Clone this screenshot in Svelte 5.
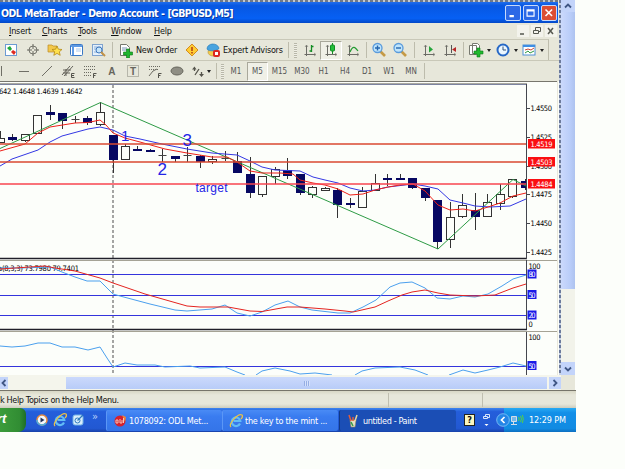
<script lang="ts">
	type Tool = { icon?: string; text?: string; width: number; pressed?: boolean };

	const menus = [
		{ name: 'Insert', width: 33 },
		{ name: 'Charts', width: 36 },
		{ name: 'Tools', width: 33 },
		{ name: 'Window', width: 43 },
		{ name: 'Help', width: 30 }
	];

	const mainTools: Tool[] = [
		{ icon: 'market', width: 22 },
		{ icon: 'cross', width: 22 },
		{ icon: 'star', width: 21 },
		{ icon: 'terminal', width: 22 },
		{ icon: 'tester', width: 22 },
		{ icon: 'sep', width: 7 },
		{ icon: 'order', width: 20 },
		{ text: 'New Order', width: 46 },
		{ icon: 'warning', width: 20 },
		{ icon: 'expert', width: 21 },
		{ text: 'Expert Advisors', width: 63 },
		{ icon: 'sep', width: 5 },
		{ icon: 'grip', width: 8 },
		{ icon: 'bars', width: 21 },
		{ icon: 'candle', width: 22, pressed: true },
		{ icon: 'line', width: 21 },
		{ icon: 'sep', width: 6 },
		{ icon: 'zoomin', width: 20 },
		{ icon: 'zoomout', width: 22 },
		{ icon: 'sep', width: 7 },
		{ icon: 'scroll', width: 21 },
		{ icon: 'shift', width: 21 },
		{ icon: 'sep', width: 6 },
		{ icon: 'indicator', width: 19 },
		{ icon: 'drop', width: 8 },
		{ icon: 'clock', width: 19 },
		{ icon: 'drop', width: 7 },
		{ icon: 'template', width: 20 },
		{ icon: 'drop', width: 6 }
	];

	const lineTools: Tool[] = [
		{ icon: 'vline', width: 12 },
		{ icon: 'hline', width: 24 },
		{ icon: 'trend', width: 21 },
		{ icon: 'channel', width: 22 },
		{ icon: 'fibo', width: 22 },
		{ icon: 'letter', width: 21 },
		{ icon: 'label', width: 22 },
		{ icon: 'fan', width: 22 },
		{ icon: 'ellipse', width: 22 },
		{ icon: 'arrows', width: 18 },
		{ icon: 'drop', width: 6 },
		{ icon: 'sep', width: 8 },
		{ icon: 'grip', width: 5 },
		{ text: 'M1', width: 22 },
		{ text: 'M5', width: 21, pressed: true },
		{ text: 'M15', width: 23 },
		{ text: 'M30', width: 22 },
		{ text: 'H1', width: 21 },
		{ text: 'H4', width: 22 },
		{ text: 'D1', width: 22 },
		{ text: 'W1', width: 22 },
		{ text: 'MN', width: 22 },
		{ icon: 'sep', width: 5 }
	];

	// x, high, low, body top, body bottom, kind (f = filled, o = open, d = doji)
	const candles: [number, number, number, number, number, string][] = [
		[0.5, 131, 142, 138, 142, 'o'],
		[12.5, 134, 141, 137, 140, 'f'],
		[25.5, 134, 142, 134, 140, 'o'],
		[37.5, 115, 133, 115, 133, 'o'],
		[50.5, 105, 120, 112, 115, 'f'],
		[62.5, 113, 129, 113, 121, 'f'],
		[75.5, 116, 123, 119, 120, 'd'],
		[87.5, 116, 125, 118, 123, 'f'],
		[100.5, 102, 126, 112, 124, 'o'],
		[113.5, 135, 173, 135, 160, 'f'],
		[125.5, 144, 159, 146, 159, 'o'],
		[137.5, 146, 151, 149, 151, 'f'],
		[150.5, 149, 152, 150, 152, 'f'],
		[162.5, 149, 162, 155, 156, 'd'],
		[175.5, 156, 162, 156, 159, 'f'],
		[187.5, 147, 162, 155, 156, 'd'],
		[200.5, 155, 168, 156, 162, 'f'],
		[212.5, 156, 164, 159, 161, 'o'],
		[225.5, 151, 161, 158, 159, 'd'],
		[237.5, 152, 173, 161, 173, 'f'],
		[250.5, 157, 198, 174, 193, 'f'],
		[262.5, 176, 197, 176, 194, 'o'],
		[275.5, 167, 184, 169, 176, 'o'],
		[287.5, 158, 179, 170, 176, 'f'],
		[300.5, 174, 195, 174, 193, 'f'],
		[312.5, 186, 198, 187, 194, 'o'],
		[325.5, 187, 191, 188, 190, 'o'],
		[337.5, 188, 218, 190, 205, 'f'],
		[350.5, 198, 208, 203, 205, 'f'],
		[362.5, 187, 207, 191, 207, 'o'],
		[375.5, 174, 191, 183, 190, 'o'],
		[387.5, 174, 186, 178, 180, 'f'],
		[400.5, 174, 180, 178, 180, 'f'],
		[412.5, 178, 189, 178, 188, 'f'],
		[425.5, 188, 201, 188, 198, 'f'],
		[437.5, 200, 249, 200, 242, 'f'],
		[450.5, 202, 248, 217, 239, 'o'],
		[462.5, 194, 218, 205, 216, 'o'],
		[475.5, 193, 230, 210, 217, 'f'],
		[487.5, 194, 216, 202, 216, 'o'],
		[500.5, 184, 210, 194, 203, 'o'],
		[512.5, 179, 198, 179, 196, 'o'],
		[525.5, 179, 190, 181, 188, 'f']
	];

	const prices = [
		{ y: 108, text: '1.4550' },
		{ y: 137, text: '1.4525' },
		{ y: 166, text: '1.4500' },
		{ y: 194, text: '1.4475' },
		{ y: 223, text: '1.4450' },
		{ y: 252, text: '1.4425' }
	];

	const levels = [
		{ y: 144, text: '1.4519' },
		{ y: 162, text: '1.4503' },
		{ y: 184, text: '1.4484' }
	];
</script>

{#snippet glyph(name: string)}
	<svg class="glyph" viewBox="0 0 16 16" width="16" height="16">
		{#if name === 'market'}
			<rect x="2.5" y="2.5" width="11" height="11" fill="#fff" stroke="#6c9bd2" />
			<path d="M4 6l3-2 2 3-2 2z" fill="#1fa83a" />
			<path d="M8 10l2-2 3 2-2 3z" fill="#e02a20" />
		{:else if name === 'cross'}
			<circle cx="8" cy="8" r="4" fill="none" stroke="#77776e" />
			<path d="M8 2v5M8 9v5M2 8h5M9 8h5" stroke="#66665e" />
		{:else if name === 'star'}
			<path d="M1 3h4l1 1h4v6H1z" fill="#f3c84c" stroke="#ba8b27" stroke-width=".7" />
			<path d="M10 4l1.4 3.2 3.6.3-2.7 2.3.9 3.5L10 11.4l-3.2 1.9.9-3.5L5 7.500l3.600-.3z" fill="#ffe14d" stroke="#b58a18" stroke-width=".8" />
		{:else if name === 'terminal'}
			<rect x="2.500" y="2.500" width="12" height="11" rx="1" fill="#fff" stroke="#3977c4" />
			<path d="M3 4h11M5 4v9" stroke="#5e9ae4" stroke-width="2" />
			<path d="M8 7h5M8 9h5" stroke="#aac9ee" />
		{:else if name === 'tester'}
			<rect x="2.500" y="2.500" width="10" height="11" fill="#e5f0fb" stroke="#7fa3ce" />
			<path d="M4 5h7M4 7h5M4 10h3" stroke="#8aafd8" />
			<circle cx="9" cy="8" r="3" fill="#c6e5fa" stroke="#3e76bd" />
			<path d="M11 10l4 4" stroke="#c29247" stroke-width="2" />
		{:else if name === 'order'}
			<path d="M2.500 2.500h6l3 3v8h-9z" fill="#fff" stroke="#75776d" />
			<path d="M4 6h5M4 8h5" stroke="#7895b7" />
			<path d="M8.500 7h3v3h3v3h-3v3h-3v-3h-3v-3h3z" fill="#1fb52f" stroke="#0b7916" stroke-width=".6" />
		{:else if name === 'warning'}
			<path d="M8 2l6 6-6 6-6-6z" fill="#ffcc32" stroke="#d48b1f" />
			<path d="M8 5v4M8 10v1.500" stroke="#b33a10" stroke-width="1.500" />
		{:else if name === 'expert'}
			<ellipse cx="8" cy="10" rx="5" ry="4" fill="#f3ca4c" stroke="#b9902e" stroke-width=".6" />
			<path d="M2 7c0-6 10-7 12-1 0 3-11 4-12 1z" fill="#48a3df" stroke="#2477b5" stroke-width=".6" />
			<rect x="8" y="8" width="7" height="7" rx="2" fill="#dc2722" />
			<rect x="10" y="10" width="3" height="3" fill="#fff" />
		{:else if name === 'bars' || name === 'candle' || name === 'line' || name === 'scroll' || name === 'shift'}
			<path d="M4.500 3v11M2.500 12.500h11" fill="none" stroke="#6b6b65" />
			<path d="M3 5l1.500-2L6 5M12 11l2 1.500-2 1.500" fill="none" stroke="#8a8a83" stroke-width=".8" />
			{#if name === 'bars'}
				<path d="M9.500 3v7M7.500 9h2M9.500 4.500h2" stroke="#138c24" stroke-width="1.300" />
			{:else if name === 'candle'}
				<path d="M9.500 1v11" stroke="#138c24" />
				<rect x="7.500" y="3" width="4" height="6" rx="1" fill="#24bf3c" stroke="#138c24" />
			{:else if name === 'line'}
				<path d="M5 10c3-7 5-5 8-1" fill="none" stroke="#239b32" stroke-width="1.200" />
			{:else if name === 'scroll'}
				<path d="M8 4l4 3.500-4 3z" fill="#25a53b" />
			{:else}
				<path d="M9.500 3v8" stroke="#555" />
				<path d="M14 5l-4 2.500 4 2.500z" fill="#b72828" />
			{/if}
		{:else if name === 'zoomin' || name === 'zoomout'}
			<path d="M9 9l5 5" stroke="#c59a46" stroke-width="2.600" />
			<circle cx="6.500" cy="6" r="4.500" fill="#bfe4fb" stroke="#5a9bdc" stroke-width="1.300" />
			<path d={name === 'zoomin' ? 'M4 6h5M6.500 3.500v5' : 'M4 6h5'} stroke="#2466af" stroke-width="1.400" />
		{:else if name === 'indicator'}
			<path d="M1.500 3.500h7v9h-7zM4.500 1.500h5l2 2v8h-7z" fill="#fff" stroke="#777970" />
			<path d="M9 6h3v3h3v3h-3v3H9v-3H6V9h3z" fill="#21b92f" stroke="#0c7c19" stroke-width=".6" />
		{:else if name === 'clock'}
			<circle cx="8" cy="8" r="5.500" fill="#ecf7ff" stroke="#2668c6" stroke-width="2" />
			<path d="M8 4.500V8h3" fill="none" stroke="#355378" />
		{:else if name === 'template'}
			<rect x="2" y="3" width="12" height="10" fill="#fff" stroke="#5091d4" />
			<path d="M2 4h12" stroke="#3e8ee4" stroke-width="2" />
			<path d="M4 8l3-1 3 1 3-2" fill="none" stroke="#c64634" />
			<path d="M4 11l3-2 2 2 4-2" fill="none" stroke="#2e9940" />
		{:else if name === 'hline'}
			<path d="M3 8.500h10" stroke="#706f66" />
		{:else if name === 'vline'}
			<path d="M3.500 3v10" stroke="#706f66" />
		{:else if name === 'trend'}
			<path d="M3 13L13 3" stroke="#706f66" />
		{:else if name === 'channel'}
			<path d="M2 12L10 3M4 13l9-10M3 7h8M3 10h7M6 6v7" stroke="#66655d" />
			<path d="M14.500 10.500h-3v4h3M11.500 12.500h2.500" fill="none" stroke="#55544d" />
		{:else if name === 'fibo' || name === 'fan'}
			{#if name === 'fibo'}
				<path d="M2 3.500h12M2 6.500h12M2 9.500h8M2 12.500h7" stroke="#6c6b62" stroke-dasharray="1 1" />
			{:else}
				<path d="M2 3.500h12M2 6.500h9" stroke="#6c6b62" stroke-dasharray="1 1" />
				<path d="M2 13l4-5 4-2" fill="none" stroke="#6c6b62" />
			{/if}
			<path d="M11.500 15v-4.500h3M11.500 12.500h2" fill="none" stroke="#55544d" />
		{:else if name === 'letter'}
			<text x="4.300" y="12" class="bold">A</text>
		{:else if name === 'label'}
			<rect x="2.500" y="2.500" width="11" height="11" fill="none" stroke="#85847a" stroke-dasharray="1 1" />
			<text x="5" y="12" class="bold">T</text>
		{:else if name === 'ellipse'}
			<ellipse cx="8" cy="8" rx="6" ry="4" fill="#8f8e84" stroke="#66655c" />
		{:else if name === 'arrows'}
			<path d="M3 6.500l2.500-3 2 3zM10 11h5l-2.500 3z" fill="#55544c" />
			<path d="M5.500 6v2M12.500 9v3M10 6l-4 6" stroke="#55544c" stroke-width="1.300" />
		{/if}
	</svg>
{/snippet}

{#snippet tools(list: Tool[])}
	{#each list as t}
		<span class="tool" class:pressed={t.pressed} class:caption={t.text} style:width="{t.width}px">
			{#if t.text}
				{t.text}
			{:else if t.icon === 'sep'}
				<i class="sep"></i>
			{:else if t.icon === 'grip'}
				<i class="grip"></i>
			{:else if t.icon === 'drop'}
				<i class="drop"></i>
			{:else if t.icon}
				{@render glyph(t.icon)}
			{/if}
		</span>
	{/each}
{/snippet}

{#snippet chevron(d: string)}
	<svg viewBox="0 0 10 10" width="10" height="10">
		<path {d} fill="none" stroke="#3f5684" stroke-width="1.800" />
	</svg>
{/snippet}

{#snippet ie()}
	<svg viewBox="0 0 14 14" width="14" height="14">
		<path d="M11 9.500A4.300 4.300 0 1 1 11.300 7H4.500" fill="none" stroke="#62bdf6" stroke-width="2.200" />
		<path d="M2 13C-1 10 9-1 13 1c1 1 0 3-1 4" fill="none" stroke="#efc243" stroke-width="1.200" />
	</svg>
{/snippet}

<div class="screen">
	<div class="canvas">
		<div class="window">
			<div class="titlebar">
				<span class="title">ODL MetaTrader - Demo Account - [GBPUSD,M5]</span>
				<span class="controls">
					<svg viewBox="0 0 16 16"><path d="M4 11.500h5" stroke="#fff" stroke-width="2.500" /></svg>
					<svg viewBox="0 0 16 16"><path d="M3.500 4.500h8v7h-8zM3.500 5.500h8" fill="none" stroke="#fff" stroke-width="1.300" /></svg>
					<svg class="close" viewBox="0 0 16 16"><path d="M4 4l7.500 7.500M11.500 4L4 11.500" stroke="#fff" stroke-width="1.800" /></svg>
				</span>
			</div>

			<div class="menubar">
				{#each menus as m}
					<span class="menu" style:width="{m.width}px"><u>{m.name[0]}</u>{m.name.slice(1)}</span>
				{/each}
				<span class="mdi">
					<svg viewBox="0 0 12 12"><path d="M3 9h4" stroke="#55574f" stroke-width="1.500" /></svg>
					<svg viewBox="0 0 12 12"><path d="M2.500 5.500h5v3h-5zM4.500 5V2.500h5v4H8" fill="none" stroke="#55574f" /></svg>
					<svg viewBox="0 0 12 12"><path d="M3 3l5 6M8 3L3 9" stroke="#55574f" stroke-width="1.500" /></svg>
				</span>
			</div>

			<div class="toolbar main">{@render tools(mainTools)}</div>
			<div class="toolbar lines">{@render tools(lineTools)}</div>

			<svg class="chart" viewBox="0 81 559 294" width="559" height="294">
				<rect x="0" y="81" width="559" height="294" fill="#fcfefa" />
				<path d="M0 81.500h557" stroke="#77766d" />
				<path d="M0 83.500h527" stroke="#a9a9a0" />
				<path d="M0 84.500h527" stroke="#7c83a0" />
				<path d="M557.500 81v294" stroke="#e9e8da" />

				<path d="M113 85v290" stroke="#4d4d4d" stroke-dasharray="3 2" />

				{#each candles as [x, high, low, top, bottom, kind]}
					<path d="M{x} {high}V{low}" stroke="#333" />
					{#if kind === 'f'}
						<rect x={x - 4.5} y={top} width={x > 520 ? 5 : 9} height={bottom - top} fill="#070862" />
					{:else if kind === 'o'}
						<rect x={x - 4} y={top + 0.5} width="8" height={bottom - top} fill="#fcfefa" stroke="#333" />
					{:else}
						<path d="M{x - 4} {top + 0.5}h8" stroke="#444" />
					{/if}
				{/each}

				<path class="thin" d="M0 148.500L34 133 100.500 102.500 438 249 513 179.500 526 186" stroke="#2d9b45" />
				<path class="thin" d="M0 166l12-7 26-9 12-8 12-6 26-7 12-2 13 3 12 6 15 3 22 5 25 5 25 4 25 2 13 6 12 6 13 3 25 1 13 6 12 3 13 3 12 5 13 3 12-1 13-3 25-3 12 2 13 3 12 11 13 3 12 3 15 1 20-1 16-7" stroke="#3438e4" />
				<path class="thin" d="M0 151l25-7 13-11 12-6 25-4 13-.5 12-2.500 6 5 7 8 12 5 15 4 25 7 22 4 25 4h15l10 5 13 9 12 2h18l13 1 7 6 13 3 12 2 13 4 12 6 13-1 12-4 13-3 12-2 13-1 12 7 13 14 12 5 13-1 12 2 13-4 12-4 13-7 13-3" stroke="#ee2018" />

				<path d="M0 144h526M0 162h526" stroke="#d94a32" stroke-width="1.300" />
				<path d="M0 184h526" stroke="#f9444f" stroke-width="1.300" />

				<g class="notes">
					<text x="121" y="141" font-size="15">1</text>
					<text x="157.500" y="175" font-size="17">2</text>
					<text x="182.500" y="146" font-size="17">3</text>
					<text x="195.500" y="192" font-size="12" textLength="32">target</text>
				</g>

				<text x="-1" y="93.500" class="num" textLength="83.500">642 1.4648 1.4639 1.4642</text>

				<path d="M0 258.500h527" stroke="#20202a" stroke-width="1.400" />
				<path d="M0 260.500h557" stroke="#a5a395" />
				<path d="M526.500 84v175M526.500 260v69M526.500 331v44" stroke="#44464e" />

				<!-- stochastic -->
				<path d="M0 274.500h526M0 295.500h526M0 315.500h526" stroke="#3434dc" />
				<text x="-2" y="271" class="num" textLength="81">a(8,3,3) 73.7980 79.7401</text>
				<path class="thin" d="M0 268h20l30-1 12 5 13 5 12 4h13l6 6 7 7 7 2 30 8 25 6 12 1 25-2 13-4 12 8 13 3 12-4 13-7 13-4 12 6 12 3 26 3h12l13-6 13-7 14-13 10-4 12-1 13 6 12 10 13 1 13-3 12 1 13-3 14-8 11-7 13-4" stroke="#4ba0ee" />
				<path class="thin" d="M0 269l15-1 30-2 10 2 20 3 25 7 13 5 32 11 42 12 13 1h28l22 4 12 .5 25-4.500h13l25 2 20 2 8 1 22-5 13-6 14-6 10-3 13-2 13 3 12 2 25 1 20-1 5-2 13-5 13-4" stroke="#e42420" />
				<path d="M0 329.500h527" stroke="#20202a" stroke-width="1.300" />
				<path d="M0 331.500h557" stroke="#a5a395" />

				<!-- rsi -->
				<path d="M0 366.500h526" stroke="#3434dc" />
				<path class="thin" d="M0 346l12 1 13-1 13-3h12l12 4h13l13 3 12-3 7 11 6 9 12-4 12 2h18l10 2 25-1 10 2 25-1 12 5 8 3M256 375l6-4 13-3 15 3 10 3 15-1 17 2M355 375l7-4 13-3 25-1 15 3 13 5M449 375l14-5 12 3 13-3 12-3 13-4 13 3" stroke="#4ba0ee" />

				{#each prices as p}
					<path d="M527 {p.y + 0.5}h3" stroke="#44464e" />
					<text x="530.500" y={p.y + 3} class="num" textLength="21.500">{p.text}</text>
				{/each}
				{#each levels as l}
					<rect x="528" y={l.y - 5} width="27" height="9.500" fill="#fa0f12" />
					<text x="530.500" y={l.y + 3} class="num" fill="#fff" textLength="22">{l.text}</text>
				{/each}

				<text x="528.500" y="268.500" class="num" textLength="12">100</text>
				<text x="528.500" y="327" class="num">0</text>
				<text x="528.500" y="339.500" class="num" textLength="12">100</text>
				{#each [{ y: 274, v: 80 }, { y: 294.5, v: 50 }, { y: 315, v: 20 }, { y: 365.5, v: 50 }] as b}
					<rect x="527.500" y={b.y - 4.5} width="9" height="9" fill="#1a1ae8" />
					<text x="528.500" y={b.y + 3.2} class="num" fill="#fff" textLength="7">{b.v}</text>
				{/each}
			</svg>
		</div>

		<div class="edge"></div>

		<div class="vscroll">
			<span class="sbtn">{@render chevron('M2 6.500L5 3.500 8 6.500')}</span>
			<span class="vthumb"></span>
			<span class="sbtn down">{@render chevron('M2 3.500L5 6.500 8 3.500')}</span>
		</div>
	</div>

	<div class="hscroll">
		<span class="sbtn left">{@render chevron('M6.500 2L3.500 5 6.500 8')}</span>
		<span class="hthumb"><i></i></span>
		<span class="sbtn right">{@render chevron('M3.500 2L6.500 5 3.500 8')}</span>
	</div>

	<div class="status">
		<span class="help">k Help Topics on the Help Menu.</span>
		<span class="cell"></span>
		<span class="cell last"></span>
	</div>

	<div class="taskbar">
		<span class="start">rt</span>
		<span class="quick">
			<svg viewBox="0 0 14 14" width="14" height="14">
				<circle cx="7" cy="7" r="5" fill="#f5f8fc" stroke="#e48a42" stroke-width="1.500" />
				<path d="M2 7a5 5 0 0 0 9 3" fill="none" stroke="#4cb0e0" stroke-width="1.500" />
				<path d="M5.500 4.500l4 2.500-4 2.500z" fill="#24345c" />
			</svg>
			{@render ie()}
			<svg viewBox="0 0 14 14" width="14" height="14">
				<rect x="2" y="2" width="10" height="10" rx="2" fill="#d9edfb" stroke="#73b3e5" />
				<circle cx="6.500" cy="7.500" r="2.500" fill="none" stroke="#2d79be" />
				<path d="M6.500 7.500L12 2" stroke="#2d79be" stroke-width="1.200" />
			</svg>
		</span>
		<span class="more">»</span>
		<span class="task">
			<svg viewBox="0 0 14 14" width="14" height="14">
				<circle cx="7" cy="7" r="5.500" fill="#d5212d" />
				<path d="M9 1l4 2-1 5z" fill="#f28036" />
				<path d="M3 9V6h2v3zM7 5v4h2V6M10.500 4v5" fill="none" stroke="#f9c2b6" />
			</svg>
			<span>1078092: ODL Met...</span>
		</span>
		<span class="task two">
			{@render ie()}
			<span>the key to the mint ...</span>
		</span>
		<span class="task active">
			<svg viewBox="0 0 14 14" width="14" height="14">
				<path d="M4 6h6l-1 7H5z" fill="#e5dfc4" stroke="#9a8c61" stroke-width=".6" />
				<path d="M5 7L3 1M7 7V3" stroke="#e25c3c" stroke-width="1.500" />
				<path d="M9 7l2-6" stroke="#ead39a" stroke-width="1.500" />
				<path d="M5 8l2 4" stroke="#379b4a" stroke-width="1.500" />
			</svg>
			<span>untitled - Paint</span>
		</span>
		<span class="lang">
			<b>?</b>
			<svg viewBox="0 0 10 16" width="10" height="16">
				<path d="M1.500 4.500h4v2h-4zM3.500 4V2.500h4v3H6" fill="none" stroke="#d9e6fb" />
				<path d="M2.500 12h4l-2 2z" fill="#fff" />
			</svg>
		</span>
		<span class="tray">
			<svg class="hide" viewBox="0 0 14 14" width="14" height="14">
				<circle cx="7" cy="7" r="6.300" fill="#2585e6" stroke="#8ac9fa" stroke-width=".8" />
				<path d="M8.500 4L5.500 7l3 3" fill="none" stroke="#fff" stroke-width="1.700" />
			</svg>
			<svg viewBox="0 0 14 14" width="14" height="14">
				<path d="M1.500 3.500h5v5h-5zM1 11.500h6M3.500 9v2" fill="#77b8e9" stroke="#d3dde8" />
				<path d="M8.500 4q1.500 2 0 4M10.500 3q2 3 0 6M12.300 2q2 4 0 8" fill="none" stroke="#58cf43" />
			</svg>
			<span class="time">12:29 PM</span>
		</span>
	</div>
</div>

<style>
	:global(body) {
		background: #fcfefa;
		overflow: hidden;
	}

	.screen {
		width: 576px;
		height: 469px;
		overflow: hidden;
		font-family: 'DejaVu Sans Condensed', 'DejaVu Sans', sans-serif;
		font-stretch: condensed;
		font-size: 9px;
		color: #111;
		white-space: nowrap;
	}

	svg {
		display: block;
		flex-shrink: 0;
	}

	.canvas {
		display: flex;
		height: 375px;
	}

	.window {
		width: 559px;
		background: #e7e7da;
	}

	.edge {
		width: 2px;
		background: repeating-linear-gradient(#6b7a9c 0 3px, #c9d3e4 3px 5px);
	}

	.titlebar {
		display: flex;
		align-items: center;
		justify-content: space-between;
		box-sizing: border-box;
		height: 23px;
		width: 558px;
		padding: 3px 1px 0 1px;
		background:
			repeating-linear-gradient(90deg, #6f7987 0 3px, #c3c9cf 3px 5px) 0 0 / 100% 2px no-repeat,
			linear-gradient(#2d7af2, #0757e2 25%, #0660f4 80%, #0348c6);
	}

	.title {
		color: #fff;
		font: bold 10.5px 'DejaVu Sans Condensed', 'DejaVu Sans', sans-serif;
		font-stretch: condensed;
		letter-spacing: -0.62px;
		word-spacing: 0.4px;
		text-shadow: 1px 1px #0a3aa0;
	}

	.controls {
		display: flex;
		gap: 2px;
	}

	.controls svg {
		box-sizing: border-box;
		width: 16px;
		height: 16px;
		border: 1px solid #c6dafc;
		border-radius: 2px;
		background: #2c69e6;
	}

	.controls .close {
		background: #dc4e33;
	}

	.menubar {
		display: flex;
		align-items: center;
		height: 16px;
		padding-left: 9px;
	}

	.menu {
		letter-spacing: -0.2px;
	}

	.mdi {
		display: flex;
		gap: 2px;
		margin-left: auto;
		padding-right: 2px;
	}

	.mdi svg {
		width: 12px;
		height: 12px;
		background: #f3f3ec;
	}

	.toolbar {
		display: flex;
		align-items: center;
		box-sizing: border-box;
		border-top: 1px solid #c9c8b8;
	}

	.main {
		height: 21px;
		width: 549px;
		border-right: 1px solid #bebdad;
	}

	.lines {
		height: 21px;
		font-size: 8px;
		color: #555;
	}

	.tool {
		display: flex;
		align-items: center;
		justify-content: center;
		flex-shrink: 0;
		box-sizing: border-box;
		height: 19px;
	}

	.main .caption {
		justify-content: flex-start;
		letter-spacing: -0.25px;
	}

	.pressed {
		border: 1px solid #fff;
		border-top-color: #a9a89b;
		border-left-color: #a9a89b;
		background: #f0f0e7;
	}

	.sep {
		width: 1px;
		height: 16px;
		background: #bdbcac;
	}

	.grip {
		width: 3px;
		height: 15px;
		background: repeating-linear-gradient(#b8b7a8 0 1px, #efefe6 1px 2px);
	}

	.drop {
		border: 2px solid transparent;
		border-top: 3px solid #222;
		border-bottom: 0;
	}

	.bold {
		font: bold 10px 'Liberation Sans', sans-serif;
		fill: #66655d;
	}

	.thin {
		fill: none;
		stroke-width: 1;
		stroke-linejoin: round;
	}

	.num {
		font-size: 7.5px;
	}

	.notes {
		font-family: 'Liberation Sans', sans-serif;
		fill: #2323e6;
	}

	.vscroll {
		display: flex;
		flex-direction: column;
		width: 14px;
		background: #f2f3ea;
	}

	.sbtn {
		display: flex;
		align-items: center;
		justify-content: center;
		flex-shrink: 0;
		height: 12px;
		background: #c3d4fa;
	}

	.vthumb {
		height: 277px;
		background: linear-gradient(90deg, #cbd9fc, #b8ccf8 70%, #aec3ef);
	}

	.down {
		margin-top: auto;
		height: 13px;
	}

	.hscroll {
		display: flex;
		align-items: center;
		box-sizing: border-box;
		width: 575px;
		height: 15px;
		padding-top: 1px;
		background: linear-gradient(90deg, #f4f5ec 561px, #e7e7da 561px);
	}

	.left {
		width: 8px;
	}

	.hthumb {
		display: flex;
		align-items: center;
		justify-content: center;
		width: 481px;
		height: 12px;
		margin-left: 58px;
		background: linear-gradient(#cbd9fc, #b8ccf8);
	}

	.hthumb i {
		width: 6px;
		height: 5px;
		background: repeating-linear-gradient(90deg, #96aee4 0 1px, #d6e2fc 1px 2px);
	}

	.right {
		width: 12px;
		margin-left: 2px;
	}

	.status {
		display: flex;
		align-items: center;
		box-sizing: border-box;
		height: 18px;
		border-top: 1px solid #77756a;
		background: linear-gradient(#d8d7c5, #e7e7da 4px, #e7e7da 13px, #cdccbd);
	}

	.help {
		width: 388px;
		letter-spacing: -0.35px;
	}

	.cell {
		width: 93px;
		height: 14px;
		border-left: 1px solid #c0bfb0;
	}

	.taskbar {
		display: flex;
		height: 24px;
		background: linear-gradient(#3d85ee, #245edb 15%, #2258d2 85%, #1842a8);
		color: #fff;
	}

	.start {
		width: 26px;
		height: 24px;
		border-radius: 0 6px 8px 0;
		background: linear-gradient(90deg, #3c9c3b, #318d33 75%, #1e6e27);
		font: italic bold 13px/22px 'Liberation Sans', sans-serif;
		text-indent: -3px;
		overflow: hidden;
	}

	.quick {
		display: flex;
		align-items: center;
		gap: 4px;
		margin-left: 9px;
		width: 57px;
	}

	.more {
		width: 14px;
		line-height: 17px;
		font-size: 11px;
		color: #b9d2fa;
	}

	.task {
		display: flex;
		align-items: center;
		gap: 2px;
		box-sizing: border-box;
		width: 116px;
		height: 21px;
		margin-top: 2px;
		padding-left: 6px;
		border-left: 1px solid #5b97f6;
		border-radius: 2px;
		background: linear-gradient(#4a8bf5, #3a7cf0 30%, #3474e8);
	}

	.task span {
		letter-spacing: -0.25px;
	}

	.active {
		width: 117px;
		margin-left: 1px;
		padding-left: 6px;
		gap: 3px;
		border-left-color: #113887;
		background: #1b4eb5;
	}

	.active span {
		letter-spacing: -0.35px;
	}

	.lang {
		display: flex;
		align-items: center;
		gap: 7px;
		margin-left: 8px;
		width: 40px;
	}

	.lang b {
		width: 9px;
		height: 10px;
		border: 1px solid #222;
		background: #fdf6c0;
		color: #111;
		font-size: 9px;
		line-height: 10px;
		text-align: center;
	}

	.tray {
		display: flex;
		align-items: center;
		flex: 1;
		background: linear-gradient(#28aaf3, #128fe8 20%, #118be2 85%, #0d6fc0);
	}

	.hide {
		margin-left: -8px;
	}

	.time {
		margin-left: 5px;
		letter-spacing: -0.1px;
	}
</style>
